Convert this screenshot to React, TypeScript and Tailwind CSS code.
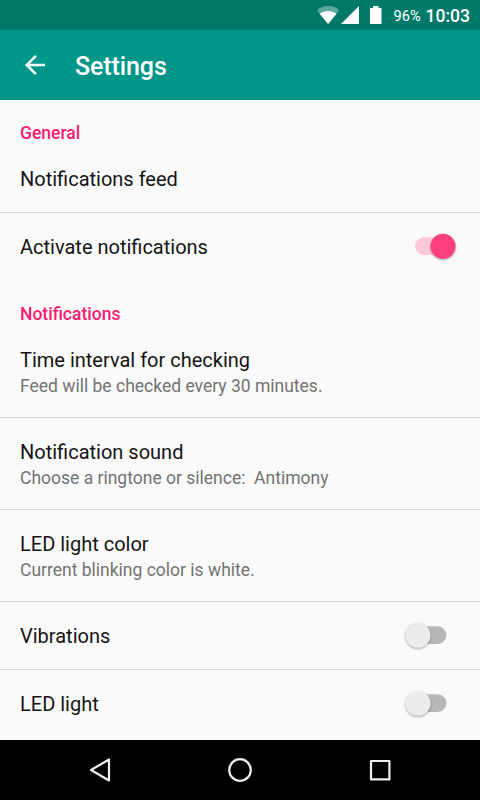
import React, { useState } from 'react';

interface SwitchProps {
    checked: boolean;
    label: string;
    onChange: () => void;
}

const Switch: React.FC<SwitchProps> = ({ checked, label, onChange }) => (
    <button role="switch" aria-checked={checked} aria-label={label} onClick={onChange} className="mr-[21px] mb-[2px]">
        <svg width="58" height="34" viewBox="0 0 58 34" className="block">
            <rect x="14" y="8.3" width="31.5" height="17.6" rx="8.8" fill={checked ? '#fdc9da' : '#b7b7b7'} />
            <circle
                cx={checked ? 42 : 17}
                cy="17.3"
                r="12.5"
                className={checked ? 'fill-[#fc407f]' : 'fill-[#ececec]'}
                style={{ filter: 'drop-shadow(0 1px 1px rgba(0,0,0,0.35))' }}
            />
        </svg>
    </button>
);

interface RowProps {
    title: string;
    summary?: string;
    divider?: boolean;
    children?: React.ReactNode;
}

const Row: React.FC<RowProps> = ({ title, summary, divider = false, children }) => (
    <div className={`flex items-center justify-between pl-5 ${summary ? 'h-[92px]' : 'h-[68px]'} ${divider ? 'border-b border-[#d8d8d8]' : ''}`}>
        <div className={summary ? 'pt-[5px]' : divider ? 'pt-[2px]' : ''}>
            <div className="text-[20px] leading-[25px] text-[#141414]">{title}</div>
            {summary && <div className="whitespace-pre text-[17.5px] leading-[27px] text-[#737373]">{summary}</div>}
        </div>
        {children}
    </div>
);

const SectionHeader: React.FC<{ children: string }> = ({ children }) => (
    <h2 className="h-[45px] pl-5 pt-[22px] text-[17.5px] leading-[22px] font-medium text-[#f81b70]">{children}</h2>
);

const StatusBar = () => (
    <div className="flex h-[30px] items-center bg-[#00796b] pr-[10px] text-white">
        <svg width="70" height="30" viewBox="0 0 70 30" className="ml-auto mr-[10px]">
            {/* Wifi */}
            <path d="M2.9 10.2C8.9 4.6 19.9 4.6 25.2 10.2L14.1 24Z" fill="#fff" fillOpacity="0.35" />
            <path d="M5.7 13.7C10.5 10.2 17.7 10.2 22.5 13.7L14.1 24Z" fill="#fff" />
            {/* Signal */}
            <path d="M45 6V24H27Z" fill="#fff" />
            {/* Battery */}
            <path d="M59 6H64.5V8H67.5V24H56V8H59Z" fill="#fff" />
        </svg>
        <span className="mr-[5px] pt-[2px] text-[14.6px] leading-none">96%</span>
        <span className="pt-[3px] text-[17.5px] leading-none font-medium">10:03</span>
    </div>
);

const NavigationBar = () => (
    <div className="flex h-[60px] items-center justify-center gap-[100px] bg-black">
        <svg width="40" height="40" viewBox="0 0 40 40" fill="none" stroke="#eee" strokeWidth="2.2" strokeLinejoin="round">
            <path d="M29 9.5V30.5L11 20Z" />
        </svg>
        <svg width="40" height="40" viewBox="0 0 40 40" fill="none" stroke="#eee" strokeWidth="2.2">
            <circle cx="20" cy="20" r="10.8" />
        </svg>
        <svg width="40" height="40" viewBox="0 0 40 40" fill="none" stroke="#eee" strokeWidth="2.2" strokeLinejoin="round">
            <rect x="11" y="11" width="18.4" height="18.4" />
        </svg>
    </div>
);

const App = () => {
    const [notifications, setNotifications] = useState(true);
    const [vibrations, setVibrations] = useState(false);
    const [led, setLed] = useState(false);

    return (
        <div className="flex h-[800px] w-[480px] flex-col overflow-hidden bg-[#fafafa] font-['Roboto',sans-serif]">
            <StatusBar />

            <header className="flex h-[70px] items-center bg-[#009788] pl-5 text-white">
                <svg width="30" height="30" viewBox="0 0 24 24" fill="currentColor">
                    <path d="M20 11H7.83l5.59-5.59L12 4l-8 8 8 8 1.41-1.41L7.83 13H20v-2z" />
                </svg>
                <h1 className="ml-[25px] mt-[4px] text-[25px] leading-[30px] font-medium tracking-[-0.1px]">Settings</h1>
            </header>

            <main className="flex-1">
                <SectionHeader>General</SectionHeader>
                <Row title="Notifications feed" divider />
                <Row title="Activate notifications">
                    <Switch label="Activate notifications" checked={notifications} onChange={() => setNotifications(!notifications)} />
                </Row>

                <SectionHeader>Notifications</SectionHeader>
                <Row title="Time interval for checking" summary="Feed will be checked every 30 minutes." divider />
                <Row title="Notification sound" summary="Choose a ringtone or silence:  Antimony" divider />
                <Row title="LED light color" summary="Current blinking color is white." divider />
                <Row title="Vibrations" divider>
                    <Switch label="Vibrations" checked={vibrations} onChange={() => setVibrations(!vibrations)} />
                </Row>
                <Row title="LED light">
                    <Switch label="LED light" checked={led} onChange={() => setLed(!led)} />
                </Row>
            </main>

            <NavigationBar />
        </div>
    );
};

export default App;
